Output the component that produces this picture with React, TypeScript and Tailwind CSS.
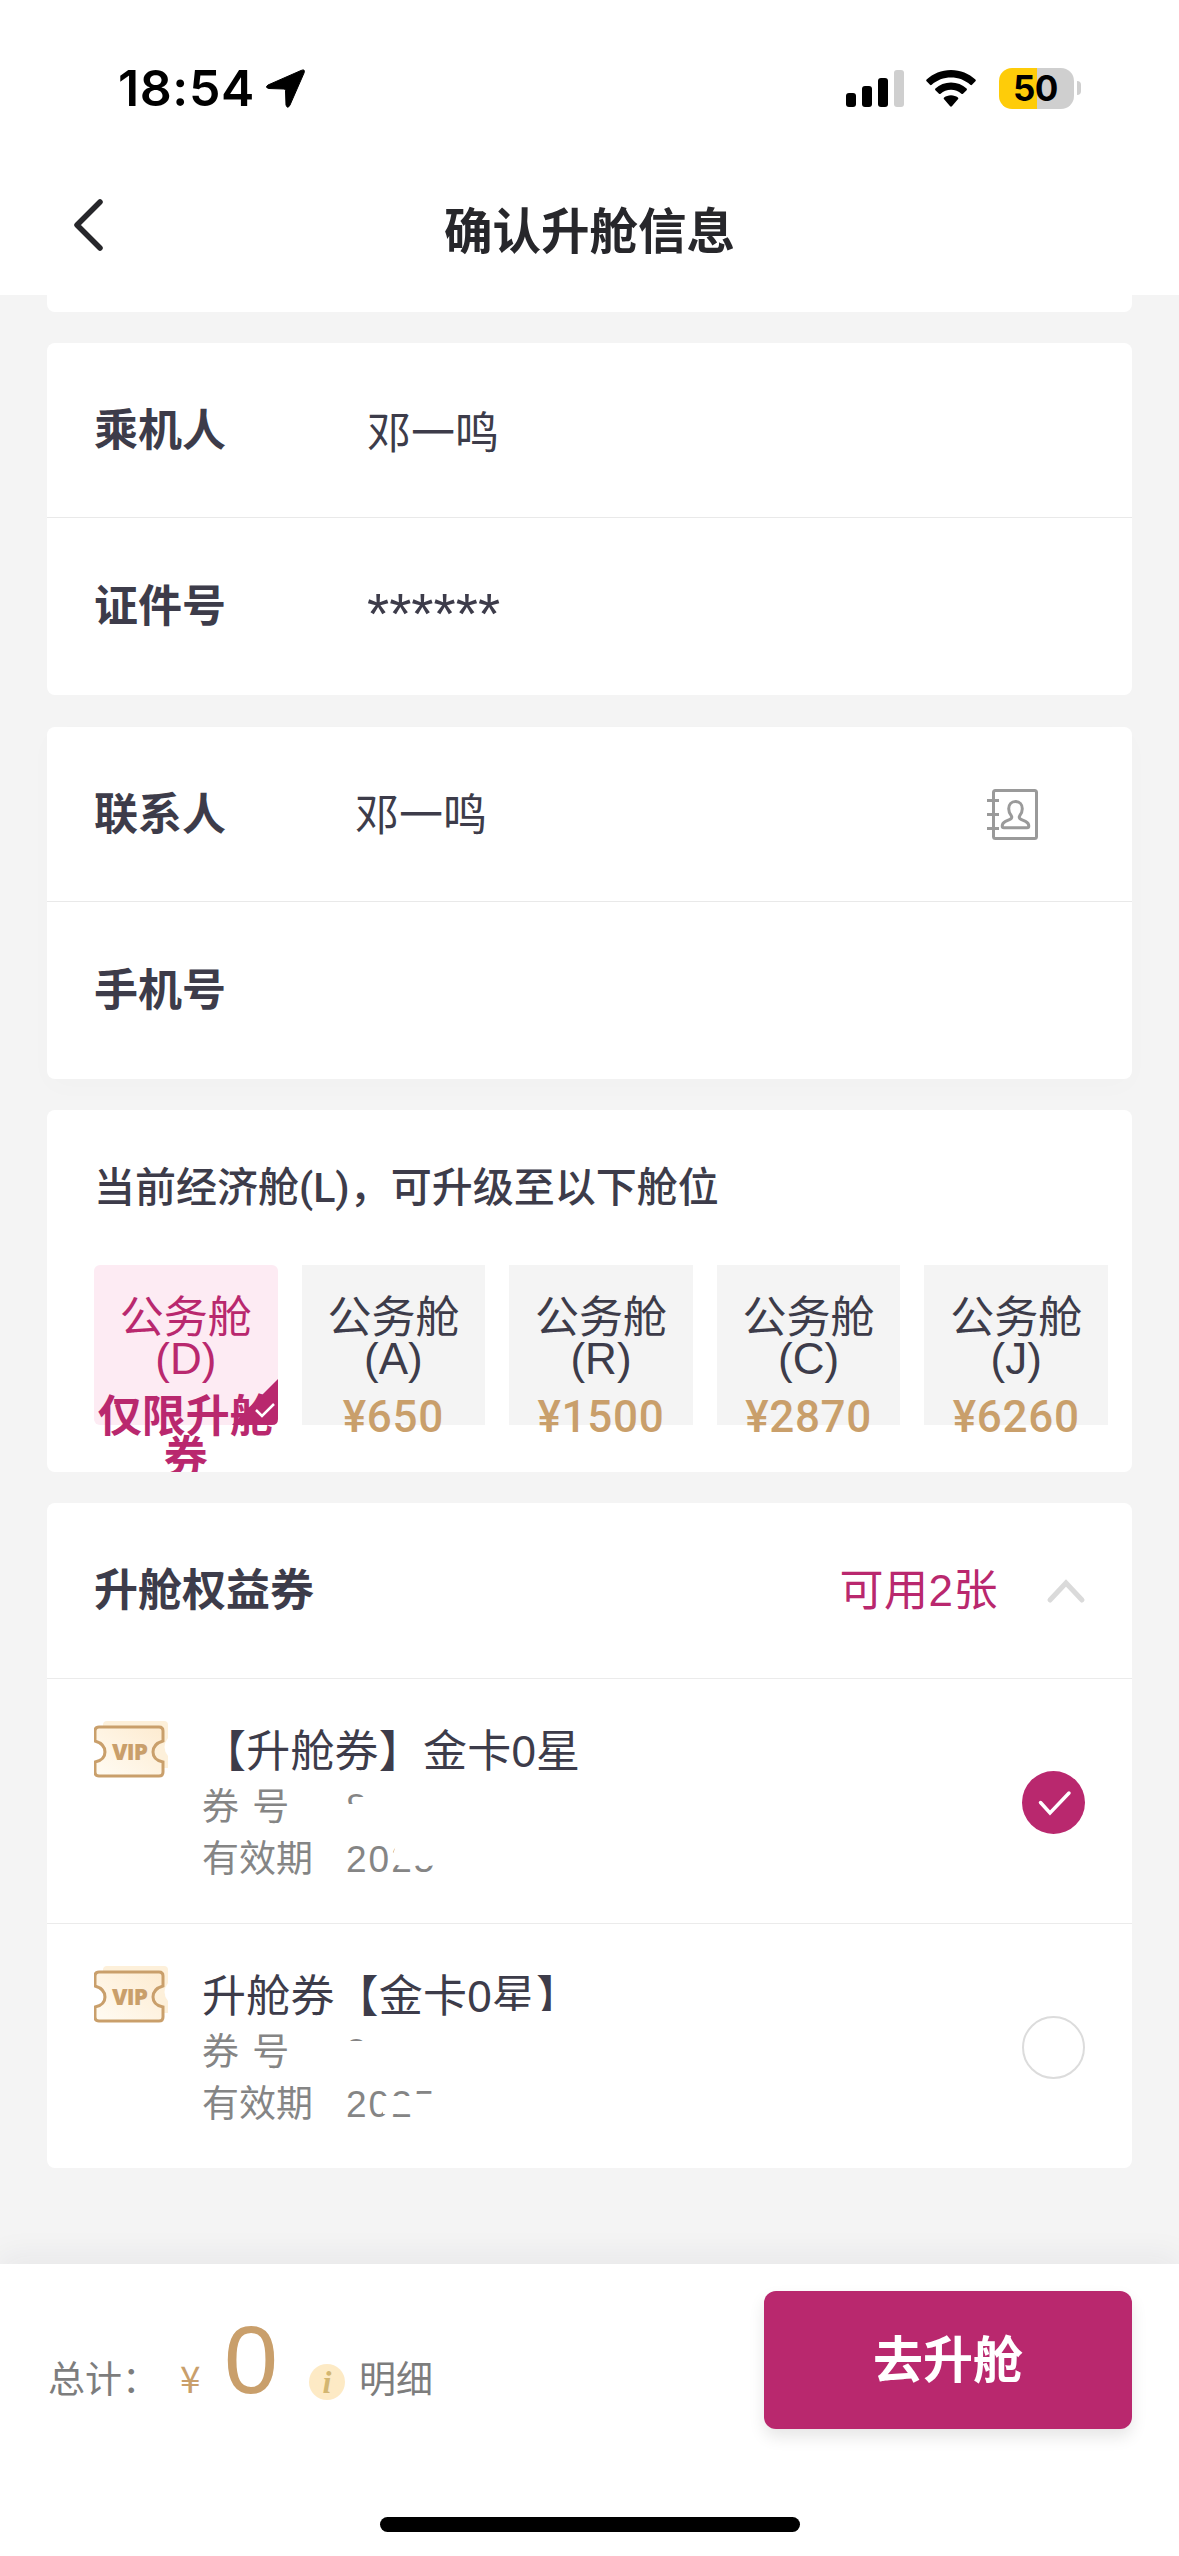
import { useState } from "react";
import type { ReactNode } from "react";

const CABINS = [
  { code: "D", price: "仅限升舱券" },
  { code: "A", price: "¥650" },
  { code: "R", price: "¥1500" },
  { code: "C", price: "¥2870" },
  { code: "J", price: "¥6260" },
];

function StatusBar() {
  return (
    <div className="flex h-[176px] items-center pl-[118px] pr-[98px] text-black">
      <span className="font-[Inter,sans-serif] text-[50px] font-semibold leading-[60px] tracking-[0.600px] w-[148px]">
        18:54
      </span>
      <svg width="39" height="39" viewBox="0 0 39 39">
        <path
          d="M35 1.500Q39.500 -.5 38 4L24 36Q21.500 40.500 20 36L19.500 21.500Q19.500 20 18 20L3 19.500Q-1.500 18.500 2 16Z"
          fill="black"
          stroke="black"
          strokeWidth="1"
        />
      </svg>
      <div className="flex-1" />
      <svg width="58" height="37" viewBox="0 0 58 37" className="mr-[22px]">
        <rect x="0" y="23" width="10" height="14" rx="3" />
        <rect x="16" y="16" width="10" height="21" rx="3" />
        <rect x="32" y="8" width="10" height="29" rx="3" />
        <rect x="48" y="0" width="10" height="37" rx="3" fill="#cfcfcf" />
      </svg>
      <svg width="50" height="37" viewBox="0 0 50 37" className="mr-[23px]">
        <path d="M25 0C34.500 0 43 3.600 49.400 9.600Q50.200 10.500 49.400 11.300L46 14.800Q45.200 15.500 44.300 14.800C39 10 32.300 7.500 25 7.500S11 10 5.700 14.800Q4.800 15.500 4 14.800L.6 11.300Q-.2 10.500 .6 9.600C7 3.600 15.500 0 25 0Z" />
        <path d="M25 12.600C31 12.600 36.400 14.800 40.600 18.500Q41.400 19.300 40.600 20.200L37 23.700Q36.200 24.400 35.400 23.700C32.500 21.200 29 19.800 25 19.800S17.500 21.200 14.600 23.700Q13.800 24.400 13 23.700L9.400 20.200Q8.600 19.300 9.400 18.500C13.600 14.800 19 12.600 25 12.600Z" />
        <path d="M25 25.300C27.700 25.300 30 26.200 31.900 27.600Q32.700 28.400 31.900 29.300L25.900 36.300Q25 37.200 24.100 36.300L18.100 29.300Q17.300 28.400 18.100 27.600C20 26.200 22.300 25.300 25 25.300Z" />
      </svg>
      <div className="flex h-[41px] w-[75px] items-center justify-center rounded-[13px] bg-[linear-gradient(to_right,#fecc09_38px,#cfcfcf_38px)]">
        <span className="pr-[2px] font-[Inter,sans-serif] text-[35px] font-bold leading-[41px] tracking-[-0.500px]">
          50
        </span>
      </div>
      <div className="ml-[3px] h-[14px] w-[4px] rounded-r-full bg-[#cfcfcf]" />
    </div>
  );
}

function Row({ label, children }: { label: string; children?: ReactNode }) {
  return (
    <div className="flex h-[175px] items-center pl-[47px] pr-[94px] pt-[2px] text-[44px] leading-[44px] text-[#3d3c4a]">
      <span className="w-[261px] font-bold">{label}</span>
      {children}
    </div>
  );
}

function ContactIcon() {
  return (
    <svg width="51" height="51" viewBox="0 0 51 51" fill="none" stroke="#9a9a9a" strokeWidth="3" className="-mt-[2px]">
      <rect x="6.500" y="1.500" width="43" height="48" rx="2" />
      <path d="M0 11.500h12M0 25.500h12M0 39.500h12" />
      <path d="M28.500 12.500c-4 0-6.800 3-6.800 7.300 0 3.500 1.300 5.400 2.600 7 .9 1.300.5 2.700-1.300 3.500l-4.500 2c-2.500 1.200-3.300 2.600-3.300 4.700 0 1.200.6 1.700 1.800 1.700h23c1.200 0 1.800-.5 1.800-1.700 0-2.100-.8-3.500-3.300-4.700l-4.500-2c-1.800-.8-2.200-2.200-1.300-3.500 1.300-1.600 2.600-3.500 2.600-7 0-4.300-2.800-7.300-6.800-7.300z" />
    </svg>
  );
}

function VipIcon() {
  return (
    <svg width="78" height="60" viewBox="0 0 78 60" fill="none">
      <defs>
        <linearGradient id="vip" x1="0" y1="1" x2="1" y2="0">
          <stop offset="0.100" stopColor="#fffaf0" />
          <stop offset="1" stopColor="#fdebd0" />
        </linearGradient>
      </defs>
      <path d="M13 3h57q4 0 4 4v13q-7 9 0 18v12H9V7q0-4 4-4z" fill="#fdf0da" />
      <path
        d="M5 9h60q4 0 4 4v10q-10 3-10 11t10 10v10q0 4-4 4H5q-4 0-4-4V44q10-2 10-10T1 23V13q0-4 4-4z"
        fill="url(#vip)"
        stroke="#c99f6b"
        strokeWidth="3"
      />
      <text
        x="36"
        y="41.500"
        textAnchor="middle"
        fontFamily="Open Sans, sans-serif"
        fontWeight="800"
        fontSize="22.500"
        textLength="36"
        fill="#c99f6b"
      >
        VIP
      </text>
    </svg>
  );
}

function Coupon({
  title,
  checked,
  onSelect,
  mask,
}: {
  title: string;
  checked: boolean;
  onSelect: () => void;
  mask: ReactNode;
}) {
  return (
    <div className="flex h-[245px] border-t border-[#ebebeb] pl-[47px] pr-[47px]" onClick={onSelect}>
      <div className="mt-[39px] w-[108px]">
        <VipIcon />
      </div>
      <div className="relative mt-[50px] flex-1">
        <div className="text-[44px] leading-[46px] tracking-[0.200px] text-[#3d3c4a]">{title}</div>
        <div className="mt-[7px] flex text-[37px] leading-[52px] text-[#858585]">
          <span className="w-[144px] [word-spacing:3px]">券 号</span>
          <span>8</span>
        </div>
        <div className="flex text-[37px] leading-[52px] text-[#858585]">
          <span className="w-[144px]">有效期</span>
          <span className="tracking-[2px]">2025</span>
        </div>
        {/* digits are partly redacted */}
        <svg className="absolute left-0 top-0" width="420" height="170" fill="white">
          {mask}
        </svg>
      </div>
      <div className="flex items-center pt-[2px]">
        {checked ? (
          <svg width="63" height="63" viewBox="0 0 63 63" fill="none">
            <circle cx="31.500" cy="31.500" r="31.500" fill="#b9286e" />
            <path d="M18.500 31.500l9.500 10.500 19-20" stroke="white" strokeWidth="3.500" strokeLinecap="round" />
          </svg>
        ) : (
          <div className="h-[63px] w-[63px] rounded-full border-2 border-[#dcdcdc]" />
        )}
      </div>
    </div>
  );
}

export default function App() {
  const [cabin, setCabin] = useState("D");
  const [coupon, setCoupon] = useState(0);

  return (
    <div className="flex h-[2556px] w-[1179px] flex-col overflow-hidden bg-[#f4f4f4] font-['Liberation_Sans','Noto_Sans_CJK_SC',sans-serif]">
      <header className="h-[295px] shrink-0 bg-white">
        <StatusBar />
        <div className="grid grid-cols-[1fr_auto_1fr] items-center px-[73px] pt-[20px]">
          <svg width="30" height="52" viewBox="0 0 30 52" fill="none" className="-mt-[4px]">
            <path d="M27 3L4 26l23 23" stroke="#27272b" strokeWidth="5.500" strokeLinecap="round" strokeLinejoin="round" />
          </svg>
          <h1 className="pt-[12px] text-[48.500px] font-bold leading-[49px] text-[#27272b]">确认升舱信息</h1>
        </div>
      </header>

      <main className="flex flex-1 flex-col px-[47px]">
        <div className="h-[17px] rounded-b-[8px] bg-white" />

        <section className="mt-[31px] flex h-[352px] flex-col divide-y divide-[#e9e9e9] rounded-[8px] bg-white">
          <Row label="乘机人">
            <span className="pl-[12px] pt-[6px]">邓一鸣</span>
          </Row>
          <Row label="证件号">
            <span className="pl-[12px] pt-[14px] text-[57px]">******</span>
          </Row>
        </section>

        <section className="mt-[32px] flex h-[352px] flex-col divide-y divide-[#e9e9e9] rounded-[8px] bg-white shadow-[0_8px_28px_rgba(0,0,0,0.015)]">
          <Row label="联系人">
            <span className="flex-1 pt-[2px]">邓一鸣</span>
            <ContactIcon />
          </Row>
          <Row label="手机号" />
        </section>

        <section className="mt-[31px] h-[362px] overflow-hidden rounded-[8px] bg-white px-[47px]">
          <h2 className="pt-[58px] font-[Roboto,'Noto_Sans_CJK_SC',sans-serif] text-[41px] font-medium leading-[41px] text-[#3d3c4a]">
            当前经济舱(L)，可升级至以下舱位
          </h2>
          <div className="mt-[56px] flex w-[1014px] gap-[24px]">
            {CABINS.map((c) => {
              const active = c.code === cabin;
              return (
                <button
                  key={c.code}
                  onClick={() => setCabin(c.code)}
                  className={
                    active
                      ? "relative h-[160px] flex-1 rounded-[6px] bg-[#fdebf3] text-[#b9286e]"
                      : "relative h-[160px] flex-1 bg-[#f4f4f4] text-[#3d3c4a]"
                  }
                >
                  <div className="flex h-[160px] flex-col items-center pt-[32px] text-[44px] leading-[42px]">
                    <span>公务舱</span>
                    <span className="-mt-px">({c.code})</span>
                    {active ? (
                      <span className="mt-[16px] w-[180px] font-bold leading-[41px]">{c.price}</span>
                    ) : (
                      <span className="mt-[16px] font-[Roboto,sans-serif] font-medium tracking-[0.700px] text-[#c99f6b]">
                        {c.price}
                      </span>
                    )}
                  </div>
                  {active && (
                    <svg className="absolute bottom-0 right-0" width="46" height="46" viewBox="0 0 46 46" fill="none">
                      <path d="M46 0v40q0 6-6 6H0z" fill="#b9286e" />
                      <path d="M24 31l6 6 12-12" stroke="white" strokeWidth="2.500" />
                    </svg>
                  )}
                </button>
              );
            })}
          </div>
        </section>

        <section className="mt-[31px] h-[665px] rounded-[8px] bg-white">
          <div className="flex h-[175px] items-center pl-[47px] pr-[46px] pt-[1px] text-[44px] leading-[44px]">
            <span className="flex-1 font-bold text-[#3d3c4a]">升舱权益券</span>
            <span className="tracking-[0.500px] text-[#b9286e]">可用2张</span>
            <svg width="40" height="26" viewBox="0 0 40 26" fill="none" className="ml-[48px]">
              <path d="M4 22L20 5l16 17" stroke="#dadada" strokeWidth="5" strokeLinecap="round" />
            </svg>
          </div>
          <Coupon
            title="【升舱券】金卡0星"
            checked={coupon === 0}
            onSelect={() => setCoupon(0)}
            mask={
              <>
                <path d="M140 75h30v25h-30zM157 68h13v20h-13z" />
                <path d="M196 110h40v25l-8 2-20-3-6 4-14-4z" />
              </>
            }
          />
          <Coupon
            title="升舱券【金卡0星】"
            checked={coupon === 1}
            onSelect={() => setCoupon(1)}
            mask={
              <>
                <path d="M290 37h90v12h-90z" />
                <path d="M140 67h30v33h-30z" />
                <path d="M181 122h60v18h-60z" />
                <path d="M211 120h30v35h-30z" />
              </>
            }
          />
        </section>
      </main>

      <footer className="flex h-[292px] shrink-0 flex-col bg-white shadow-[0_-8px_30px_rgba(40,40,60,0.060)]">
        <div className="flex h-[253px] items-start pl-[48px] pr-[47px]">
          <div className="flex flex-1 items-baseline pt-[48px] text-[37px] text-[#7d7d7d]">
            <span className="w-[132px]">总计：</span>
            <span className="w-[44px] font-['Noto_Sans_CJK_SC',sans-serif] leading-[96px] text-[#c99f6b]">¥</span>
            <span className="w-[85px] text-[97px] leading-[96px] text-[#c99f6b]">0</span>
            <span className="flex h-[36px] w-[36px] items-center justify-center rounded-full bg-[#fdeac5] font-['Liberation_Serif',serif] text-[32px] font-bold italic leading-[36px] text-[#d3b671]">
              i
            </span>
            <span className="pl-[14px]">明细</span>
          </div>
          <button className="mt-[27px] h-[138px] w-[368px] rounded-[12px] bg-[#b9286e] pt-[2px] text-[50px] font-bold text-white shadow-[0_8px_16px_rgba(0,0,0,0.100)]">
            去升舱
          </button>
        </div>
        <div className="mx-auto h-[15px] w-[420px] rounded-full bg-black" />
      </footer>
    </div>
  );
}
